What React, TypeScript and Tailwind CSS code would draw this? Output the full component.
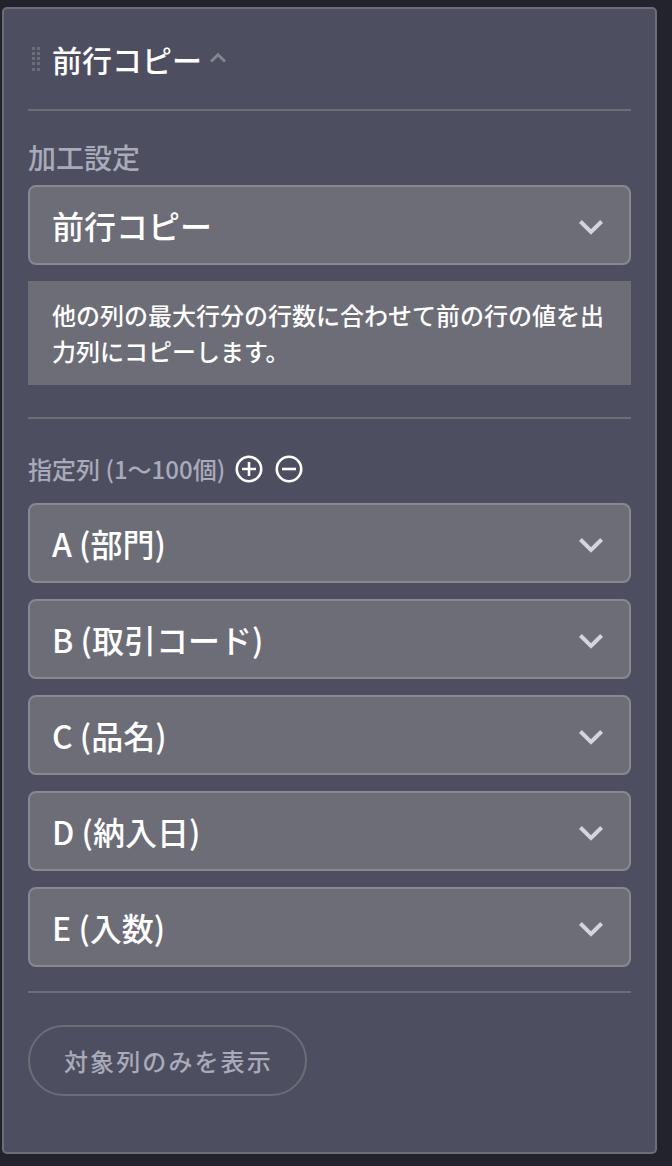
import type { ReactNode } from 'react';

const columns = ['A (部門)', 'B (取引コード)', 'C (品名)', 'D (納入日)', 'E (入数)'];

function SelectField({ label }: { label: string }) {
  return (
    <button type="button" className="flex h-20 w-full items-center justify-between rounded-lg border-2 border-[#888893] bg-[#6d6d78] pr-[25px] pl-[22px] text-left">
      <span className="text-[32px] leading-[48px] font-medium text-white">{label}</span>
      <svg width="26" height="24" viewBox="0 0 26 24" fill="none" stroke="#d4d4da" strokeWidth="4">
        <path d="M2.4 8.5 13 19 23.6 8.5" />
      </svg>
    </button>
  );
}

function CircleButton({ label, children }: { label: string; children: ReactNode }) {
  return (
    <button type="button" aria-label={label}>
      <svg width="28" height="28" viewBox="0 0 28 28" fill="none" stroke="white" strokeWidth="2.6" className="block">
        <circle cx="14" cy="14" r="12.2" />
        {children}
      </svg>
    </button>
  );
}

function DragHandle() {
  return (
    <div className="mb-px grid grid-cols-2 gap-x-[2px] gap-y-[2.25px]">
      {Array.from({ length: 10 }, (_, i) => (
        <span key={i} className="size-[3px] bg-[#6d6d78]" />
      ))}
    </div>
  );
}

export default function App() {
  return (
    <div className="h-[1166px] w-[672px] bg-[#23232d] pt-[7px] pl-[2px] font-['Noto_Sans_CJK_JP',sans-serif] font-medium">
      <section className="h-[1147px] w-[655px] rounded-[5px] border-2 border-[#6d6d78] bg-[#4d4e5f] px-6">
        <header className="flex h-[102px] items-center border-b-2 border-[#6d6d78] pl-1">
          <DragHandle />
          <h2 className="ml-3 text-[30px] leading-[45px] font-medium text-white">前行コピー</h2>
          <svg width="16" height="12" viewBox="0 0 16 12" fill="none" stroke="#85858f" strokeWidth="2.8" className="mb-[2px] ml-2">
            <path d="M1 9.5 8 2.7l7 6.8" />
          </svg>
        </header>

        <div className="h-[308px] border-b-2 border-[#6d6d78] pt-[25px]">
          <p className="mb-[7px] text-[28px] leading-[42px] text-[#a9aaba]">加工設定</p>
          <SelectField label="前行コピー" />
          <p className="mt-4 bg-[#6d6d78] py-4 pr-5 pl-6 text-2xl leading-9 text-white">
            他の列の最大行分の行数に合わせて前の行の値を出力列にコピーします。
          </p>
        </div>

        <div className="h-[574px] border-b-2 border-[#6d6d78] pt-8">
          <div className="mb-4 flex h-9 items-center">
            <p className="w-[207px] text-2xl leading-9 whitespace-nowrap text-[#a9aaba]">指定列 (1〜100個)</p>
            <div className="flex gap-3">
              <CircleButton label="追加">
                <path d="M14 7v14M7 14h14" />
              </CircleButton>
              <CircleButton label="削除">
                <path d="M7 14h14" />
              </CircleButton>
            </div>
          </div>
          <div className="flex flex-col gap-4">
            {columns.map((column) => (
              <SelectField key={column} label={column} />
            ))}
          </div>
        </div>

        <button type="button" className="mt-8 flex h-[71px] w-[279px] items-center rounded-full border-2 border-[#6d6d78] pl-[34px] text-2xl leading-9 tracking-[2.1px] whitespace-nowrap text-[#a9aaba]">
          対象列のみを表示
        </button>
      </section>
    </div>
  );
}
